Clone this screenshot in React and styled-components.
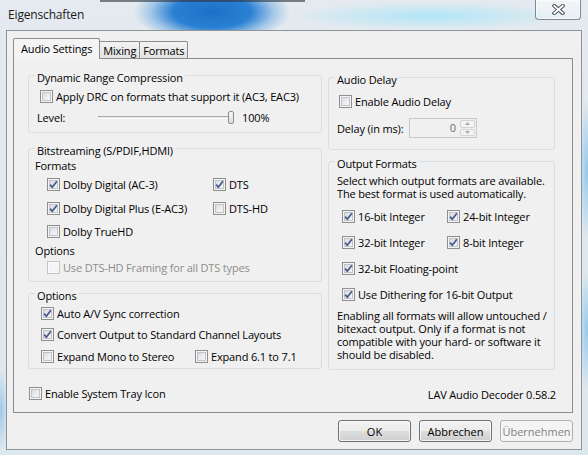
import React from 'react'
import styled, { createGlobalStyle } from 'styled-components'

const GlobalStyle = createGlobalStyle`
  html, body {
    margin: 0;
    padding: 0;
  }
  body {
    width: 588px;
    height: 455px;
    overflow: hidden;
    font-family: 'Open Sans', 'Noto Sans', sans-serif;
    font-size: 11px;
    letter-spacing: -0.16px;
    color: #000;
  }
  * {
    box-sizing: border-box;
  }
`

const Window = styled.div`
  width: 588px;
  height: 455px;
  display: flex;
  flex-direction: column;
  background:
    linear-gradient(180deg, rgba(45, 50, 60, 0.6) 0, rgba(45, 50, 60, 0.6) 2px, transparent 2px) 100px 0 / 205px 3px no-repeat,
    radial-gradient(78px 32px at 212px 12px, #1d70c6 0%, #2a80d3 50%, rgba(110, 170, 225, 0.5) 80%, rgba(210, 230, 242, 0) 100%),
    radial-gradient(140px 14px at 430px 16px, rgba(160, 228, 250, 0.75), rgba(200, 235, 250, 0) 100%),
    radial-gradient(9px 70px at 587px 170px, rgba(120, 190, 235, 0.75), rgba(120, 190, 235, 0) 100%),
    radial-gradient(9px 60px at 587px 330px, rgba(120, 190, 235, 0.7), rgba(120, 190, 235, 0) 100%),
    radial-gradient(7px 40px at 1px 410px, rgba(120, 180, 230, 0.6), rgba(120, 180, 230, 0) 100%),
    linear-gradient(180deg, #e4eaef 0%, #dde7ee 100%);
`

const TitleBar = styled.div`
  height: 30px;
  flex: none;
  display: flex;
  align-items: flex-start;
`

const Title = styled.div`
  padding: 7px 0 0 8px;
  font-size: 12px;
  line-height: 16px;
  color: #1b1b1b;
`

const CloseButton = styled.div`
  width: 46px;
  height: 20px;
  margin: 0 7px 0 auto;
  border: 1px solid rgba(70, 80, 95, 0.65);
  border-top: none;
  border-radius: 0 0 4px 4px;
  background: linear-gradient(180deg, rgba(255, 255, 255, 0.55), rgba(255, 255, 255, 0.25));
  box-shadow: inset 0 0 0 1px rgba(255, 255, 255, 0.6);
  display: flex;
  align-items: center;
  justify-content: center;
`

const Client = styled.div`
  flex: 1;
  margin: 0 6px 5px 6px;
  border: 1px solid #8e9398;
  background: #f0f0f0;
  display: flex;
  flex-direction: column;
  padding: 7px 8px 7px 6px;
`

const TabStrip = styled.div`
  flex: none;
  height: 21px;
  margin-bottom: -1px;
  display: flex;
  align-items: flex-end;
`

const Tab = styled.div`
  height: ${({ $active }) => ($active ? 21 : 17)}px;
  margin-bottom: ${({ $active }) => ($active ? 0 : 1)}px;
  margin-left: ${({ $first }) => ($first ? 0 : -1)}px;
  padding: 0 ${({ $active }) => ($active ? 7 : 3)}px ${({ $active }) => ($active ? 2 : 0)}px;
  border: 1px solid #898c95;
  border-bottom: none;
  border-radius: 2px 2px 0 0;
  background: ${({ $active }) => ($active ? '#f4f4f4' : 'linear-gradient(180deg, #f3f3f3, #e3e3e3)')};
  display: flex;
  align-items: center;
  position: relative;
  z-index: ${({ $active }) => ($active ? 2 : 0)};
`

const Panel = styled.div`
  flex: 1;
  border: 1px solid #898c95;
  background: #f0f0f0;
  padding: 7px 16px 0 14px;
  display: flex;
  flex-direction: column;
  position: relative;
  z-index: 1;
`

const Columns = styled.div`
  display: grid;
  grid-template-columns: 294px 227px;
  column-gap: 6px;
  align-items: start;
`

const Column = styled.div`
  display: flex;
  flex-direction: column;
`

const Group = styled.fieldset`
  margin: ${({ $mt }) => $mt || 0}px 0 0 0;
  padding: 0 0 ${({ $pb }) => $pb || 0}px 0;
  border: 1px solid #d5dfe5;
  border-radius: 3px;
  min-width: 0;
`

const Legend = styled.legend`
  margin-left: 6px;
  padding: 4px 2px 0;
  line-height: 15px;
`

const Row = styled.div`
  display: flex;
  align-items: center;
  height: ${({ $h }) => $h}px;
  margin-top: ${({ $mt }) => $mt || 0}px;
  padding-left: ${({ $indent }) => $indent || 0}px;
`

const Cell = styled.div`
  width: ${({ $w }) => $w}px;
  flex: none;
  display: flex;
  align-items: center;
`

const Label = styled.span`
  line-height: 15px;
  white-space: nowrap;
`

const Paragraph = styled.p`
  margin: ${({ $mt }) => $mt || 0}px 0 0 0;
  padding: 0 0 0 8px;
  line-height: 13px;
  white-space: nowrap;
`

const CheckLabel = styled.label`
  display: inline-flex;
  align-items: center;
  gap: 3px;
  white-space: nowrap;
  line-height: 15px;
  color: ${({ $disabled }) => ($disabled ? '#8d8d8d' : '#000')};
`

const Box = styled.span`
  width: 13px;
  height: 13px;
  flex: none;
  display: flex;
  align-items: center;
  justify-content: center;
  border: 1px solid ${({ $disabled }) => ($disabled ? '#c4c4c4' : '#8f8f8f')};
  background: ${({ $disabled }) =>
    $disabled ? '#f4f4f4' : 'linear-gradient(135deg, #cfd1d5 0%, #eceef0 55%, #fafafa 100%)'};
  box-shadow: ${({ $disabled }) =>
    $disabled ? 'inset 0 0 0 1px #fbfbfb' : 'inset 0 0 0 1px #f4f4f4, inset 0 0 0 2px #c1c5ca'};
`

function Check ({ checked, disabled, children }) {
  return (
    <CheckLabel $disabled={disabled}>
      <Box $disabled={disabled}>
        {checked && (
          <svg width='11' height='11' viewBox='0 0 11 11'>
            <path d='M2.2 5.6 L4.3 8.3 L8.9 2.3' fill='none' stroke='#4a5c8e' strokeWidth='1.8' strokeLinejoin='round' />
          </svg>
        )}
      </Box>
      {children}
    </CheckLabel>
  )
}

const SliderTrack = styled.div`
  width: 132px;
  height: 3px;
  border-top: 1px solid #a9acaf;
  border-bottom: 1px solid #ffffff;
  background: #e4e6e8;
`

const SliderThumb = styled.div`
  width: 6px;
  height: 13px;
  margin-left: -2px;
  border: 1px solid #8b8d90;
  border-radius: 2px;
  background: linear-gradient(180deg, #f7f7f7, #dcdcdc);
`

const Percent = styled.span`
  margin-left: 8px;
`

const Spin = styled.div`
  width: 68px;
  height: 20px;
  display: flex;
  border: 1px solid #c5cacf;
  background: #f0f0f0;
  padding: 1px;
`

const SpinValue = styled.div`
  flex: 1;
  text-align: right;
  padding-right: 4px;
  line-height: 16px;
  color: #6d6d6d;
`

const SpinButtons = styled.div`
  width: 15px;
  display: flex;
  flex-direction: column;
  gap: 1px;
`

const SpinButton = styled.div`
  flex: 1;
  border: 1px solid #d2d5d8;
  border-radius: 2px;
  background: #f3f3f3;
  display: flex;
  align-items: center;
  justify-content: center;
`

function Arrow ({ up }) {
  return (
    <svg width='5' height='3' viewBox='0 0 5 3'>
      <path d={up ? 'M0 3 L2.5 0 L5 3 Z' : 'M0 0 L2.5 3 L5 0 Z'} fill='#a8abae' />
    </svg>
  )
}

const Footer = styled.div`
  margin-top: 11px;
  height: 24px;
  padding-left: 1px;
  display: flex;
  align-items: center;
  justify-content: space-between;
`

const Version = styled.span`
  padding-top: 3px;
`

const ButtonRow = styled.div`
  flex: none;
  margin-top: 7px;
  display: flex;
  justify-content: flex-end;
  gap: 8px;
`

const Button = styled.button`
  width: 73px;
  height: 22px;
  padding: 0;
  font: inherit;
  font-size: 11px;
  border: 1px solid ${({ disabled }) => (disabled ? '#adb2b5' : '#707070')};
  border-radius: 3px;
  background: ${({ disabled }) =>
    disabled ? '#f4f4f4' : 'linear-gradient(180deg, #f2f2f2 0%, #ebebeb 50%, #dddddd 51%, #cfcfcf 100%)'};
  box-shadow: ${({ disabled }) => (disabled ? 'none' : 'inset 0 0 0 1px rgba(255, 255, 255, 0.75)')};
  color: ${({ disabled }) => (disabled ? '#838383' : '#000')};
`

export default function App () {
  return (
    <>
      <GlobalStyle />
      <Window>
        <TitleBar>
          <Title>Eigenschaften</Title>
          <CloseButton>
            <svg width='13' height='11' viewBox='0 0 13 11'>
              <path d='M2.3 1.8 L10.7 9.2 M10.7 1.8 L2.3 9.2' stroke='#4f5866' strokeWidth='3.8' strokeLinecap='square' />
              <path d='M2.3 1.8 L10.7 9.2 M10.7 1.8 L2.3 9.2' stroke='#ffffff' strokeWidth='1.7' strokeLinecap='square' />
            </svg>
          </CloseButton>
        </TitleBar>

        <Client>
          <TabStrip>
            <Tab $active $first>Audio Settings</Tab>
            <Tab>Mixing</Tab>
            <Tab>Formats</Tab>
          </TabStrip>

          <Panel>
            <Columns>
              <Column>
                <Group $pb={4}>
                  <Legend>Dynamic Range Compression</Legend>
                  <Row $h={22} $indent={11}>
                    <Check>Apply DRC on formats that support it (AC3, EAC3)</Check>
                  </Row>
                  <Row $h={21} $indent={8}>
                    <Cell $w={61}><Label>Level:</Label></Cell>
                    <SliderTrack />
                    <SliderThumb />
                    <Percent>100%</Percent>
                  </Row>
                </Group>

                <Group $mt={6} $pb={4}>
                  <Legend>Bitstreaming (S/PDIF,HDMI)</Legend>
                  <Row $h={15} $indent={6}><Label>Formats</Label></Row>
                  <Row $h={23} $indent={18}>
                    <Cell $w={166}><Check checked>Dolby Digital (AC-3)</Check></Cell>
                    <Check checked>DTS</Check>
                  </Row>
                  <Row $h={24} $indent={18}>
                    <Cell $w={166}><Check checked>Dolby Digital Plus (E-AC3)</Check></Cell>
                    <Check>DTS-HD</Check>
                  </Row>
                  <Row $h={23} $indent={18}>
                    <Check>Dolby TrueHD</Check>
                  </Row>
                  <Row $h={14} $indent={6}><Label>Options</Label></Row>
                  <Row $h={20} $indent={18}>
                    <Check disabled>Use DTS-HD Framing for all DTS types</Check>
                  </Row>
                </Group>

                <Group $mt={2} $pb={1}>
                  <Legend>Options</Legend>
                  <Row $h={20} $indent={12}>
                    <Check checked>Auto A/V Sync correction</Check>
                  </Row>
                  <Row $h={22} $indent={12}>
                    <Check checked>Convert Output to Standard Channel Layouts</Check>
                  </Row>
                  <Row $h={22} $indent={12}>
                    <Cell $w={154}><Check>Expand Mono to Stereo</Check></Cell>
                    <Check>Expand 6.1 to 7.1</Check>
                  </Row>
                </Group>
              </Column>

              <Column>
                <Group $mt={2} $pb={8}>
                  <Legend>Audio Delay</Legend>
                  <Row $h={28} $indent={10}>
                    <Check>Enable Audio Delay</Check>
                  </Row>
                  <Row $h={26} $indent={8}>
                    <Cell $w={72}><Label>Delay (in ms):</Label></Cell>
                    <Spin>
                      <SpinValue>0</SpinValue>
                      <SpinButtons>
                        <SpinButton><Arrow up /></SpinButton>
                        <SpinButton><Arrow /></SpinButton>
                      </SpinButtons>
                    </Spin>
                  </Row>
                </Group>

                <Group $mt={2} $pb={8}>
                  <Legend>Output Formats</Legend>
                  <Paragraph $mt={3}>
                    Select which output formats are available.<br />
                    The best format is used automatically.
                  </Paragraph>
                  <Row $h={26} $indent={13} $mt={3}>
                    <Cell $w={105}><Check checked>16-bit Integer</Check></Cell>
                    <Check checked>24-bit Integer</Check>
                  </Row>
                  <Row $h={26} $indent={13}>
                    <Cell $w={105}><Check checked>32-bit Integer</Check></Cell>
                    <Check checked>8-bit Integer</Check>
                  </Row>
                  <Row $h={26} $indent={13}>
                    <Check checked>32-bit Floating-point</Check>
                  </Row>
                  <Row $h={26} $indent={13}>
                    <Check checked>Use Dithering for 16-bit Output</Check>
                  </Row>
                  <Paragraph $mt={2}>
                    Enabling all formats will allow untouched /<br />
                    bitexact output. Only if a format is not<br />
                    compatible with your hard- or software it<br />
                    should be disabled.
                  </Paragraph>
                </Group>
              </Column>
            </Columns>

            <Footer>
              <Check>Enable System Tray Icon</Check>
              <Version>LAV Audio Decoder 0.58.2</Version>
            </Footer>
          </Panel>

          <ButtonRow>
            <Button>OK</Button>
            <Button>Abbrechen</Button>
            <Button disabled>Übernehmen</Button>
          </ButtonRow>
        </Client>
      </Window>
    </>
  )
}
